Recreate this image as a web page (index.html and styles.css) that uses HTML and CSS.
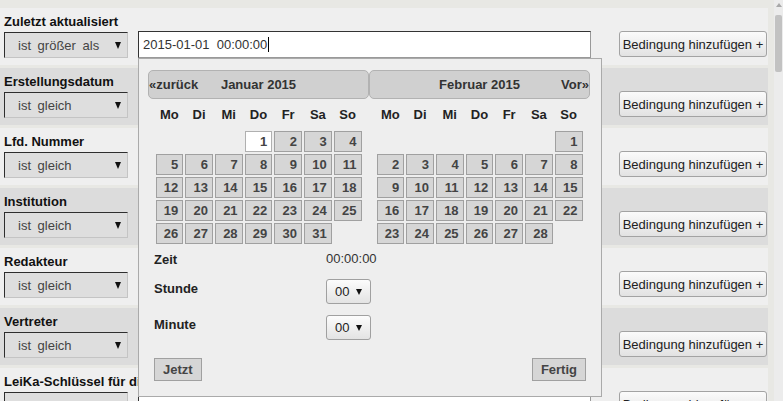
FILE: index.html
```html
<!DOCTYPE html>
<html lang="de">
<head>
    <meta charset="UTF-8">
    <meta name="viewport" content="width=device-width, initial-scale=1.0">
    <title>Erweiterte Suche</title>
    <link rel="stylesheet" href="styles.css">
</head>
<body>
    <div class="frame">
        <main class="filters">
            <div class="filter">
                <label class="filter-label">Zuletzt aktualisiert</label>
                <div class="filter-controls">
                    <div class="operator">ist größer als</div>
                    <div class="value-field">
                        <div class="value-input">2015-01-01  00:00:00<span class="caret"></span></div>

                        <!-- Datums-/Zeitauswahl -->
                        <div class="datepicker">
                            <div class="months">
                                <div class="month">
                                    <div class="month-header">
                                        <span class="prev">«zurück</span>
                                        <span class="title">Januar 2015</span>
                                        <span class="next"></span>
                                    </div>
                                    <table class="calendar" data-offset="3" data-days="31" data-selected="1">
                                        <thead>
                                            <tr><th>Mo</th><th>Di</th><th>Mi</th><th>Do</th><th>Fr</th><th>Sa</th><th>So</th></tr>
                                        </thead>
                                        <tbody></tbody>
                                    </table>
                                </div>
                                <div class="month">
                                    <div class="month-header">
                                        <span class="prev"></span>
                                        <span class="title">Februar 2015</span>
                                        <span class="next">Vor»</span>
                                    </div>
                                    <table class="calendar" data-offset="6" data-days="28" data-selected="0">
                                        <thead>
                                            <tr><th>Mo</th><th>Di</th><th>Mi</th><th>Do</th><th>Fr</th><th>Sa</th><th>So</th></tr>
                                        </thead>
                                        <tbody></tbody>
                                    </table>
                                </div>
                            </div>

                            <div class="timepicker">
                                <div class="time-row">
                                    <span class="time-label">Zeit</span>
                                    <span class="time-value">00:00:00</span>
                                </div>
                                <div class="time-row">
                                    <span class="time-label">Stunde</span>
                                    <div class="time-select">00</div>
                                </div>
                                <div class="time-row">
                                    <span class="time-label">Minute</span>
                                    <div class="time-select">00</div>
                                </div>
                            </div>

                            <div class="picker-buttons">
                                <button class="picker-btn">Jetzt</button>
                                <button class="picker-btn">Fertig</button>
                            </div>
                        </div>
                    </div>
                    <button class="add-btn">Bedingung hinzufügen +</button>
                </div>
            </div>

            <div class="filter">
                <label class="filter-label">Erstellungsdatum</label>
                <div class="filter-controls">
                    <div class="operator">ist gleich</div>
                    <div class="value-field"><div class="value-input"></div></div>
                    <button class="add-btn">Bedingung hinzufügen +</button>
                </div>
            </div>

            <div class="filter">
                <label class="filter-label">Lfd. Nummer</label>
                <div class="filter-controls">
                    <div class="operator">ist gleich</div>
                    <div class="value-field"><div class="value-input"></div></div>
                    <button class="add-btn">Bedingung hinzufügen +</button>
                </div>
            </div>

            <div class="filter">
                <label class="filter-label">Institution</label>
                <div class="filter-controls">
                    <div class="operator">ist gleich</div>
                    <div class="value-field"><div class="value-input"></div></div>
                    <button class="add-btn">Bedingung hinzufügen +</button>
                </div>
            </div>

            <div class="filter">
                <label class="filter-label">Redakteur</label>
                <div class="filter-controls">
                    <div class="operator">ist gleich</div>
                    <div class="value-field"><div class="value-input"></div></div>
                    <button class="add-btn">Bedingung hinzufügen +</button>
                </div>
            </div>

            <div class="filter">
                <label class="filter-label">Vertreter</label>
                <div class="filter-controls">
                    <div class="operator">ist gleich</div>
                    <div class="value-field"><div class="value-input"></div></div>
                    <button class="add-btn">Bedingung hinzufügen +</button>
                </div>
            </div>

            <div class="filter">
                <label class="filter-label">LeiKa-Schlüssel für die Leistung</label>
                <div class="filter-controls">
                    <div class="operator">ist gleich</div>
                    <div class="value-field"><div class="value-input"></div></div>
                    <button class="add-btn">Bedingung hinzufügen +</button>
                </div>
            </div>
        </main>

        <div class="gutter"></div>
        <div class="scrollbar">
            <div class="scroll-arrow"></div>
            <div class="scroll-thumb"></div>
        </div>
    </div>

    <script>
        // Fill the month tables with day cells (week starts on Monday)
        function buildMonth(table) {
            const offset = Number(table.dataset.offset);
            const days = Number(table.dataset.days);
            const selected = Number(table.dataset.selected);
            const body = table.querySelector('tbody');
            let row = null;
            const total = Math.ceil((offset + days) / 7) * 7;
            for (let i = 0; i < total; i++) {
                if (i % 7 === 0) {
                    row = document.createElement('tr');
                    body.appendChild(row);
                }
                const cell = document.createElement('td');
                const day = i - offset + 1;
                if (day >= 1 && day <= days) {
                    const link = document.createElement('a');
                    link.className = day === selected ? 'day selected' : 'day';
                    link.textContent = day;
                    cell.appendChild(link);
                }
                row.appendChild(cell);
            }
        }

        document.querySelectorAll('.calendar').forEach(buildMonth);
    </script>
</body>
</html>
```

FILE: styles.css
```css
* {
    margin: 0;
    padding: 0;
    box-sizing: border-box;
}

body {
    font-family: 'Liberation Sans', Arial, sans-serif;
    font-size: 13px;
    color: #111;
    background: #e8e8e4;
    overflow: hidden;
}

.frame {
    display: flex;
    height: 100vh;
}

.filters {
    flex-shrink: 0;
    width: 768px;
    padding-top: 8px;
}

.filter {
    height: 57px;
    margin-bottom: 3px;
    padding: 5px 1px 0 4px;
    background: #efefef;
}

.filter:nth-child(even) {
    background: #dcdcdc;
}

.filter-label {
    display: block;
    font-weight: bold;
    line-height: 17px;
    white-space: nowrap;
}

.filter-controls {
    display: flex;
    align-items: flex-start;
    margin-top: 1px;
}

.operator {
    display: flex;
    align-items: center;
    justify-content: space-between;
    width: 124px;
    height: 26px;
    margin-top: 1px;
    padding: 0 6px 0 13px;
    background: #dedede;
    border: 1px solid;
    border-color: #2e2e2e #c4c4c4 #c4c4c4 #2e2e2e;
    color: #444;
    word-spacing: 3px;
}

.operator::after {
    content: "";
    border-left: 3px solid transparent;
    border-right: 3px solid transparent;
    border-top: 7px solid #111;
}

.value-field {
    position: relative;
    width: 453px;
    margin-left: 10px;
}

.value-input {
    height: 27px;
    padding-left: 4px;
    line-height: 25px;
    background: #fff;
    border: 1px solid;
    border-color: #333 #999 #999 #333;
    color: #333;
    white-space: pre;
}

.caret {
    display: inline-block;
    width: 1px;
    height: 15px;
    margin-left: 1px;
    background: #000;
    vertical-align: -3px;
}

.add-btn {
    margin-left: auto;
    width: 148px;
    height: 26px;
    font: inherit;
    color: #222;
    background: linear-gradient(#fbfbfb, #e2e2e2);
    border: 1px solid #a3a3a3;
    border-radius: 3px;
}

/* datepicker popup */
.datepicker {
    position: absolute;
    top: 100%;
    left: 0;
    z-index: 10;
    width: 464px;
    padding: 11px 11px 15px 9px;
    background: #eee;
    border: 1px solid #aaa;
    color: #222;
}

.months {
    display: flex;
}

.month {
    width: 221px;
}

.month-header {
    display: grid;
    grid-template-columns: 1fr auto 1fr;
    height: 29px;
    line-height: 27px;
    background: #d0d0d0;
    border: 1px solid #b2b2b2;
    border-radius: 5px;
    font-weight: bold;
    color: #333;
}

.prev {
    justify-self: start;
}

.next {
    justify-self: end;
}

.calendar {
    width: 210px;
    margin: 0 auto;
    border-spacing: 2px;
    table-layout: fixed;
}

.calendar th {
    height: 28px;
    padding-bottom: 1px;
    font-weight: bold;
    color: #222;
    text-align: center;
}

.calendar td {
    padding: 0;
}

.day {
    display: block;
    height: 21px;
    padding-right: 4px;
    line-height: 19px;
    text-align: right;
    font-weight: bold;
    color: #444;
    background: #d6d6d6;
    border: 1px solid #a0a0a0;
}

.day.selected {
    background: #fff;
    border-color: #b0b0b0;
}

.timepicker {
    display: flex;
    flex-direction: column;
    gap: 11px;
    margin-top: 4px;
    padding-left: 6px;
}

.time-row {
    display: grid;
    grid-template-columns: 172px 1fr;
    align-items: start;
    line-height: 17px;
}

.time-label {
    font-weight: bold;
    padding-top: 1px;
}

.time-value {
    color: #333;
}

.time-select {
    display: flex;
    align-items: center;
    justify-content: space-between;
    width: 45px;
    height: 25px;
    padding: 0 8px;
    border: 1px solid #a0a0a0;
    border-radius: 3px;
    background: linear-gradient(#fcfcfc, #e3e3e3);
    color: #222;
}

.time-select::after {
    content: "";
    border-left: 3px solid transparent;
    border-right: 3px solid transparent;
    border-top: 6px solid #111;
}

.picker-buttons {
    display: flex;
    justify-content: space-between;
    margin-top: 18px;
    padding: 0 4px 0 6px;
}

.picker-btn {
    height: 23px;
    padding: 0 8px;
    font: inherit;
    font-weight: bold;
    color: #444;
    background: #d6d6d6;
    border: 1px solid #a0a0a0;
}

/* page scrollbar */
.gutter {
    flex: 1;
}

.scrollbar {
    display: flex;
    flex-direction: column;
    width: 9px;
    background: #ececec;
}

.scroll-arrow {
    height: 15px;
    display: flex;
    justify-content: center;
    padding-top: 3px;
}

.scroll-arrow::before {
    content: "";
    height: 0;
    border-left: 3px solid transparent;
    border-right: 3px solid transparent;
    border-bottom: 4px solid #a8a8a8;
}

.scroll-thumb {
    height: 57px;
    margin: 0 1px;
    background: #c2c2c2;
    border-radius: 2px;
}
```
